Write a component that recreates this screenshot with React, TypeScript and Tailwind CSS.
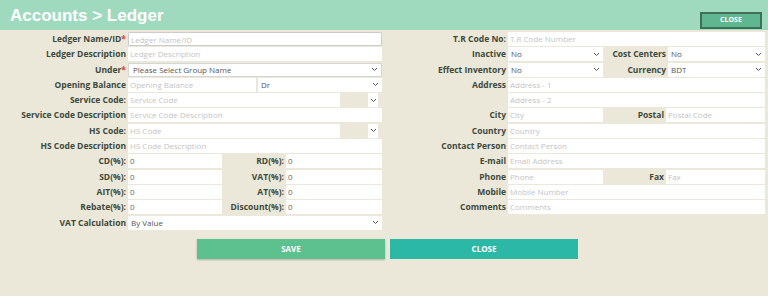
import type { ReactNode } from "react";

const labelCls =
  "text-right font-bold text-[8.5px] leading-[14px] text-[#3d4a3c] whitespace-nowrap pr-[2px]";
const inputCls = "h-[14px] bg-white text-[8px] leading-[14px] px-[2px] truncate";

function Chevron() {
  return (
    <svg width="7" height="5" viewBox="0 0 7 5" className="shrink-0">
      <path d="M1 1l2.5 2.5L6 1" fill="none" stroke="#555" strokeWidth="1" />
    </svg>
  );
}

function Field({ ph, value, w }: { ph?: string; value?: string; w?: string }) {
  return (
    <div className={`${inputCls} ${w ?? "flex-1"} ${value ? "text-[#666]" : "text-[#c4c4c4]"}`}>
      {value ?? ph}
    </div>
  );
}

function Select({ value, w, grey }: { value: string; w?: string; grey?: boolean }) {
  return (
    <div
      className={`h-[14px] bg-white text-[8px] flex items-center justify-between pr-[3px] ${
        w ?? "flex-1"
      } ${grey ? "border border-[#d6d6d6] text-[#555] pl-[4px]" : "text-[#555] pl-[3px]"}`}
    >
      <span className="truncate">{value}</span>
      <Chevron />
    </div>
  );
}

function Row({ label, req, lw, children }: { label: string; req?: boolean; lw: string; children: ReactNode }) {
  return (
    <div className="flex h-[14px] items-center">
      <div className={`${labelCls} ${lw}`}>
        {label}
        {req && <span className="text-[#e0403a]">*</span>}
      </div>
      <div className="flex flex-1 h-[14px] items-center">{children}</div>
    </div>
  );
}

function Pair({ l1, v1, l2, v2 }: { l1: string; v1: string; l2: string; v2: string }) {
  return (
    <Row label={l1} lw="w-[128px]">
      <Field value={v1} w="w-[94px]" />
      <div className={`${labelCls} w-[64px]`}>{l2}</div>
      <Field value={v2} />
    </Row>
  );
}

function CodeRow({ label, ph }: { label: string; ph: string }) {
  return (
    <Row label={label} lw="w-[128px]">
      <Field ph={ph} w="w-[212px]" />
      <div className="flex-1" />
      <div className="w-[10px] h-[14px] bg-white flex items-center justify-center mr-[4px]">
        <Chevron />
      </div>
    </Row>
  );
}

export default function App() {
  return (
    <div
      className="w-[768px] h-[296px] bg-[#ebe7d9] overflow-hidden"
      style={{ fontFamily: "'Open Sans', sans-serif" }}
    >
      <header className="h-[30px] bg-[#9fdabf] flex items-center justify-between pl-[10px] pr-[6px]">
        <h1
          className="text-white font-bold text-[17px] leading-none"
          style={{ fontFamily: "'Liberation Sans', Arial, sans-serif" }}
        >
          Accounts &gt; Ledger
        </h1>
        <button className="mt-[10px] w-[62px] h-[17px] bg-[#5fb790] border-2 border-[#3f6f58] text-white text-[7px] font-bold">
          CLOSE
        </button>
      </header>

      <div className="flex pt-[2px]">
        <div className="w-[382px] flex flex-col gap-y-[1.3px]">
          <Row label="Ledger Name/ID" req lw="w-[128px]">
            <div className={`${inputCls} flex-1 border border-[#ccc] rounded-[1px] text-[#c4c4c4]`}>
              Ledger Name/ID
            </div>
          </Row>
          <Row label="Ledger Description" lw="w-[128px]">
            <Field ph="Ledger Description" />
          </Row>
          <Row label="Under" req lw="w-[128px]">
            <Select value="Please Select Group Name" grey />
          </Row>
          <Row label="Opening Balance" lw="w-[128px]">
            <Field ph="Opening Balance" w="w-[128px]" />
            <div className="w-[2px]" />
            <Select value="Dr" />
          </Row>
          <CodeRow label="Service Code:" ph="Service Code" />
          <Row label="Service Code Description" lw="w-[128px]">
            <Field ph="Service Code Description" />
          </Row>
          <CodeRow label="HS Code:" ph="HS Code" />
          <Row label="HS Code Description" lw="w-[128px]">
            <Field ph="HS Code Description" />
          </Row>
          <Pair l1="CD(%):" v1="0" l2="RD(%):" v2="0" />
          <Pair l1="SD(%):" v1="0" l2="VAT(%):" v2="0" />
          <Pair l1="AIT(%):" v1="0" l2="AT(%):" v2="0" />
          <Pair l1="Rebate(%):" v1="0" l2="Discount(%):" v2="0" />
          <Row label="VAT Calculation" lw="w-[128px]">
            <Select value="By Value" />
          </Row>
        </div>

        <div className="w-[381px] ml-[2px] flex flex-col gap-y-[1.3px]">
          <Row label="T.R Code No:" lw="w-[124px]">
            <Field ph="T.R Code Number" />
          </Row>
          <Row label="Inactive" lw="w-[124px]">
            <Select value="No" w="w-[95px]" />
            <div className={`${labelCls} w-[65px]`}>Cost Centers</div>
            <Select value="No" />
          </Row>
          <Row label="Effect Inventory" lw="w-[124px]">
            <Select value="No" w="w-[95px]" />
            <div className={`${labelCls} w-[65px]`}>Currency</div>
            <Select value="BDT" />
          </Row>
          <Row label="Address" lw="w-[124px]">
            <Field ph="Address - 1" />
          </Row>
          <Row label="" lw="w-[124px]">
            <Field ph="Address - 2" />
          </Row>
          <Row label="City" lw="w-[124px]">
            <Field ph="City" w="w-[95px]" />
            <div className={`${labelCls} w-[63px]`}>Postal</div>
            <Field ph="Postal Code" />
          </Row>
          <Row label="Country" lw="w-[124px]">
            <Field ph="Country" />
          </Row>
          <Row label="Contact Person" lw="w-[124px]">
            <Field ph="Contact Person" />
          </Row>
          <Row label="E-mail" lw="w-[124px]">
            <Field ph="Email Address" />
          </Row>
          <Row label="Phone" lw="w-[124px]">
            <Field ph="Phone" w="w-[95px]" />
            <div className={`${labelCls} w-[63px]`}>Fax</div>
            <Field ph="Fax" />
          </Row>
          <Row label="Mobile" lw="w-[124px]">
            <Field ph="Mobile Number" />
          </Row>
          <Row label="Comments" lw="w-[124px]">
            <Field ph="Comments" />
          </Row>
        </div>
      </div>

      <div className="flex gap-[5px] pl-[197px] mt-[9px]">
        <button className="w-[188px] h-[20px] bg-[#5cc08f] text-white text-[8px] font-bold shadow-[0_1px_2px_rgba(0,0,0,0.25)]">
          SAVE
        </button>
        <button className="w-[188px] h-[20px] bg-[#2cb8a6] text-white text-[8px] font-bold">
          CLOSE
        </button>
      </div>
    </div>
  );
}
